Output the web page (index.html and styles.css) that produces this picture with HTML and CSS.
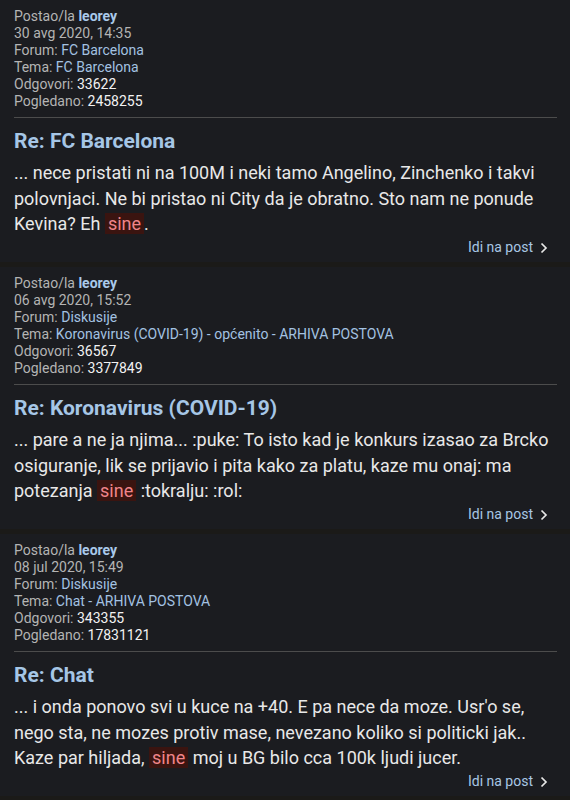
FILE: index.html
```html
<!DOCTYPE html>
<html lang="sr">
<head>
<meta charset="utf-8">
<link rel="stylesheet" href="styles.css">
</head>
<body>
<div class="list">
  <article class="post">
    <div class="meta">
      <div>Postao/la <a class="user">leorey</a></div>
      <div>30 avg 2020, 14:35</div>
      <div>Forum: <a class="link">FC Barcelona</a></div>
      <div>Tema: <a class="link">FC Barcelona</a></div>
      <div>Odgovori: <span class="num">33622</span></div>
      <div>Pogledano: <span class="num">2458255</span></div>
    </div>
    <hr class="divider">
    <h2 class="title">Re: FC Barcelona</h2>
    <p class="body">... nece pristati ni na 100M i neki tamo Angelino, Zinchenko i takvi polovnjaci. Ne bi pristao ni City da je obratno. Sto nam ne ponude Kevina? Eh <mark class="hl">sine</mark>.</p>
    <div class="more"><a class="go">Idi na post <svg class="chev" width="8" height="12" viewBox="0 0 8 12"><path d="M1.5 1.5 L6 6 L1.5 10.5" fill="none" stroke="#e8e8e8" stroke-width="1.7"/></svg></a></div>
  </article>
  <article class="post">
    <div class="meta">
      <div>Postao/la <a class="user">leorey</a></div>
      <div>06 avg 2020, 15:52</div>
      <div>Forum: <a class="link">Diskusije</a></div>
      <div>Tema: <a class="link">Koronavirus (COVID-19) - općenito - ARHIVA POSTOVA</a></div>
      <div>Odgovori: <span class="num">36567</span></div>
      <div>Pogledano: <span class="num">3377849</span></div>
    </div>
    <hr class="divider">
    <h2 class="title">Re: Koronavirus (COVID-19)</h2>
    <p class="body">... pare a ne ja njima... :puke: To isto kad je konkurs izasao za Brcko osiguranje, lik se prijavio i pita kako za platu, kaze mu onaj: ma potezanja <mark class="hl">sine</mark> :tokralju: :rol:</p>
    <div class="more"><a class="go">Idi na post <svg class="chev" width="8" height="12" viewBox="0 0 8 12"><path d="M1.5 1.5 L6 6 L1.5 10.5" fill="none" stroke="#e8e8e8" stroke-width="1.7"/></svg></a></div>
  </article>
  <article class="post">
    <div class="meta">
      <div>Postao/la <a class="user">leorey</a></div>
      <div>08 jul 2020, 15:49</div>
      <div>Forum: <a class="link">Diskusije</a></div>
      <div>Tema: <a class="link">Chat - ARHIVA POSTOVA</a></div>
      <div>Odgovori: <span class="num">343355</span></div>
      <div>Pogledano: <span class="num">17831121</span></div>
    </div>
    <hr class="divider">
    <h2 class="title">Re: Chat</h2>
    <p class="body">... i onda ponovo svi u kuce na +40. E pa nece da moze. Usr'o se, nego sta, ne mozes protiv mase, nevezano koliko si politicki jak.. Kaze par hiljada, <mark class="hl">sine</mark> moj u BG bilo cca 100k ljudi jucer.</p>
    <div class="more"><a class="go">Idi na post <svg class="chev" width="8" height="12" viewBox="0 0 8 12"><path d="M1.5 1.5 L6 6 L1.5 10.5" fill="none" stroke="#e8e8e8" stroke-width="1.7"/></svg></a></div>
  </article>
</div>
</body>
</html>
```
FILE: styles.css
```css
html, body {
  margin: 0;
  padding: 0;
  background: #1b1a18;
}
body {
  font-family: Roboto, "Noto Sans", sans-serif;
  color: #e4e4e4;
  width: 570px;
  height: 800px;
  overflow: hidden;
}
.list {
  display: flex;
  flex-direction: column;
  gap: 5px;
}
.post {
  background: #1b1c20;
  padding: 8px 13px 6px 14px;
  height: 248px;
}
.meta {
  font-size: 14px;
  line-height: 17px;
  color: #b4b4b4;
}
.user {
  color: #a9c9ea;
  font-weight: bold;
}
.link {
  color: #a3c2e2;
}
.num {
  color: #f2f2f2;
}
.divider {
  border: 0;
  height: 1px;
  background: #4c4c4c;
  margin: 7px 0 0;
}
.title {
  margin: 9px 0 0;
  font-size: 21px;
  line-height: 28px;
  font-weight: bold;
  color: #a6c6e6;
}
.body {
  margin: 5px 0 0;
  font-size: 18px;
  line-height: 25.5px;
  color: #e8e8e8;
}
.hl {
  background: #3a1410;
  color: #f0858a;
  padding: 0 3px;
}
.more {
  display: flex;
  justify-content: flex-end;
  padding-right: 9px;
  line-height: 20px;
}
.go {
  display: flex;
  align-items: center;
  gap: 7px;
  font-size: 14px;
  color: #a8c6e4;
}
.chev {
  display: block;
  margin-top: 2px;
}
```
